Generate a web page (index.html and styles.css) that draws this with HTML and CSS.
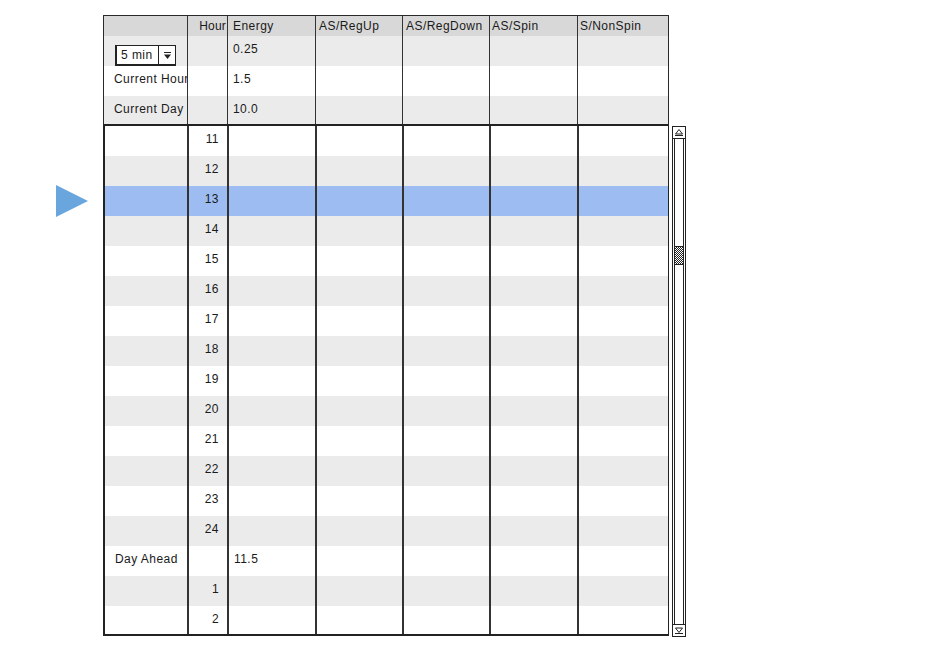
FILE: index.html
```html
<!DOCTYPE html>
<html>
<head>
<meta charset="utf-8">
<link rel="stylesheet" href="styles.css">
</head>
<body>
<div class="page">
  <div class="gutter"><div class="pointer"></div></div>
  <div class="main">
    <div class="tbl top">
      <div class="row head">
        <div class="c c1"></div>
        <div class="c c2 r">Hour</div>
        <div class="c c3">Energy</div>
        <div class="c c4">AS/RegUp</div>
        <div class="c c5">AS/RegDown</div>
        <div class="c c6">AS/Spin</div>
        <div class="c c7">S/NonSpin</div>
      </div>
      <div class="row alt">
        <div class="c c1"><div class="select"><span class="sel-text">5 min</span><span class="sel-btn"><svg width="11" height="11" viewBox="0 0 11 11"><rect x="2" y="2" width="7" height="1" fill="#222"/><path d="M2 4.5 L9 4.5 L5.5 9 Z" fill="#222"/></svg></span></div></div>
        <div class="c c2"></div>
        <div class="c c3">0.25</div>
        <div class="c c4"></div><div class="c c5"></div><div class="c c6"></div><div class="c c7"></div>
      </div>
      <div class="row">
        <div class="c c1 label">Current Hour</div>
        <div class="c c2"></div>
        <div class="c c3">1.5</div>
        <div class="c c4"></div><div class="c c5"></div><div class="c c6"></div><div class="c c7"></div>
      </div>
      <div class="row alt last">
        <div class="c c1 label">Current Day</div>
        <div class="c c2"></div>
        <div class="c c3">10.0</div>
        <div class="c c4"></div><div class="c c5"></div><div class="c c6"></div><div class="c c7"></div>
      </div>
    </div>
    <div class="lower">
      <div class="tbl body">
        <div class="row"><div class="c c1"></div><div class="c c2 r">11</div><div class="c c3"></div><div class="c c4"></div><div class="c c5"></div><div class="c c6"></div><div class="c c7"></div></div>
        <div class="row alt"><div class="c c1"></div><div class="c c2 r">12</div><div class="c c3"></div><div class="c c4"></div><div class="c c5"></div><div class="c c6"></div><div class="c c7"></div></div>
        <div class="row sel"><div class="c c1"></div><div class="c c2 r">13</div><div class="c c3"></div><div class="c c4"></div><div class="c c5"></div><div class="c c6"></div><div class="c c7"></div></div>
        <div class="row alt"><div class="c c1"></div><div class="c c2 r">14</div><div class="c c3"></div><div class="c c4"></div><div class="c c5"></div><div class="c c6"></div><div class="c c7"></div></div>
        <div class="row"><div class="c c1"></div><div class="c c2 r">15</div><div class="c c3"></div><div class="c c4"></div><div class="c c5"></div><div class="c c6"></div><div class="c c7"></div></div>
        <div class="row alt"><div class="c c1"></div><div class="c c2 r">16</div><div class="c c3"></div><div class="c c4"></div><div class="c c5"></div><div class="c c6"></div><div class="c c7"></div></div>
        <div class="row"><div class="c c1"></div><div class="c c2 r">17</div><div class="c c3"></div><div class="c c4"></div><div class="c c5"></div><div class="c c6"></div><div class="c c7"></div></div>
        <div class="row alt"><div class="c c1"></div><div class="c c2 r">18</div><div class="c c3"></div><div class="c c4"></div><div class="c c5"></div><div class="c c6"></div><div class="c c7"></div></div>
        <div class="row"><div class="c c1"></div><div class="c c2 r">19</div><div class="c c3"></div><div class="c c4"></div><div class="c c5"></div><div class="c c6"></div><div class="c c7"></div></div>
        <div class="row alt"><div class="c c1"></div><div class="c c2 r">20</div><div class="c c3"></div><div class="c c4"></div><div class="c c5"></div><div class="c c6"></div><div class="c c7"></div></div>
        <div class="row"><div class="c c1"></div><div class="c c2 r">21</div><div class="c c3"></div><div class="c c4"></div><div class="c c5"></div><div class="c c6"></div><div class="c c7"></div></div>
        <div class="row alt"><div class="c c1"></div><div class="c c2 r">22</div><div class="c c3"></div><div class="c c4"></div><div class="c c5"></div><div class="c c6"></div><div class="c c7"></div></div>
        <div class="row"><div class="c c1"></div><div class="c c2 r">23</div><div class="c c3"></div><div class="c c4"></div><div class="c c5"></div><div class="c c6"></div><div class="c c7"></div></div>
        <div class="row alt"><div class="c c1"></div><div class="c c2 r">24</div><div class="c c3"></div><div class="c c4"></div><div class="c c5"></div><div class="c c6"></div><div class="c c7"></div></div>
        <div class="row"><div class="c c1 label">Day Ahead</div><div class="c c2 r"></div><div class="c c3">11.5</div><div class="c c4"></div><div class="c c5"></div><div class="c c6"></div><div class="c c7"></div></div>
        <div class="row alt"><div class="c c1"></div><div class="c c2 r">1</div><div class="c c3"></div><div class="c c4"></div><div class="c c5"></div><div class="c c6"></div><div class="c c7"></div></div>
        <div class="row last"><div class="c c1"></div><div class="c c2 r">2</div><div class="c c3"></div><div class="c c4"></div><div class="c c5"></div><div class="c c6"></div><div class="c c7"></div></div>
      </div>
      <div class="scrollbar">
        <div class="sb-btn up"><svg width="10" height="9" viewBox="0 0 10 9"><path d="M5 1.5 L8.5 6 L1.5 6 Z" fill="none" stroke="#222" stroke-width="1"/><rect x="1" y="7" width="8" height="1" fill="#222"/></svg></div>
        <div class="sb-track">
          <div class="sb-space"></div>
          <div class="sb-thumb"></div>
          <div class="sb-space grow"></div>
        </div>
        <div class="sb-btn down"><svg width="10" height="9" viewBox="0 0 10 9"><path d="M1.5 2 L8.5 2 L5 6.5 Z" fill="none" stroke="#222" stroke-width="1"/><rect x="1" y="7" width="8" height="1" fill="#222"/></svg></div>
      </div>
    </div>
  </div>
</div>
</body>
</html>
```

FILE: styles.css
```css
* { box-sizing: border-box; }
html, body { margin: 0; padding: 0; background: #fff; }
body {
  font-family: "Liberation Sans", Arial, sans-serif;
  font-size: 12px;
  letter-spacing: 0.45px;
  color: #1a1a1a;
}
.page {
  display: flex;
  padding-top: 15px;
  width: 933px;
  height: 653px;
}
.gutter {
  width: 103px;
  padding-top: 170px;
  padding-left: 56px;
}
.pointer {
  width: 0;
  height: 0;
  border-top: 16px solid transparent;
  border-bottom: 16px solid transparent;
  border-left: 32px solid #6aa6de;
}
.main {
  display: flex;
  flex-direction: column;
}
.tbl {
  width: 566px;
  border: 1px solid #2a2a2a;
}
.tbl.top { border-bottom: 2px solid #222; }
.row {
  display: grid;
  grid-template-columns: 83px 40px 88px 87px 87px 88px 91px;
  height: 30px;
  background: #fff;
}
.row.alt { background: #ebebeb; }
.row.sel { background: #9dbdf2; }
.top .row.last { height: 28px; }
.row.head { height: 20px; background: #d8d8d8; }
.c {
  border-left: 1px solid #333;
  padding: 5px 0 0 3px;
  line-height: 16px;
  white-space: nowrap;
  overflow: hidden;
}
.c1 { border-left: none; padding-left: 10px; overflow: visible; position: relative; z-index: 1; }
.c2 { background: inherit; position: relative; z-index: 2; }
.c3 { padding-left: 5px; }
.head .c { padding-top: 2px; line-height: 16px; }
.head .c3 { padding-left: 5px; }
.head .c6, .head .c7 { padding-left: 2px; }
.c.r { text-align: right; padding-right: 8px; padding-left: 0; }
.head .c.r { padding-right: 1px; letter-spacing: 0.2px; }

.select {
  margin-top: 4px;
  margin-left: 1px;
  width: 61px;
  height: 21px;
  border: 1px solid #222;
  border-left-width: 2px;
  border-bottom-width: 2px;
  background: #fff;
  display: flex;
  align-items: stretch;
}
.sel-text {
  flex: 1;
  padding-left: 4px;
  line-height: 18px;
}
.sel-btn {
  width: 17px;
  border-left: 1px solid #222;
  display: flex;
  align-items: center;
  justify-content: center;
}

.lower {
  display: flex;
  align-items: flex-start;
}
.tbl.body {
  border-width: 0 1px 2px 2px;
  border-color: #222;
  height: 510px;
  overflow: hidden;
}
.body .row { grid-template-columns: 82px 40px 88px 87px 87px 88px 91px; }
.body .c { border-left-width: 2px; }
.body .c1 { border-left: none; }
.body .row.last { height: 28px; }

.scrollbar {
  margin-left: 3px;
  width: 14px;
  height: 511px;
  border: 1px solid #222;
  display: flex;
  flex-direction: column;
  background: #fff;
}
.sb-btn {
  height: 12px;
  border-bottom: 1px solid #222;
  display: flex;
  align-items: center;
  justify-content: center;
  flex: none;
}
.sb-btn.down { border-bottom: none; border-top: 1px solid #222; }
.sb-track {
  flex: 1;
  display: flex;
  flex-direction: column;
  margin: 0 1px;
  border-left: 1px solid #222;
  border-right: 1px solid #222;
}
.sb-space { height: 107px; flex: none; }
.sb-space.grow { flex: 1; height: auto; }
.sb-thumb {
  height: 19px;
  flex: none;
  background: repeating-conic-gradient(#222 0 25%, #fff 0 50%) 0 0 / 2px 2px;
  border-top: 1px solid #222;
  border-bottom: 1px solid #222;
}
```
